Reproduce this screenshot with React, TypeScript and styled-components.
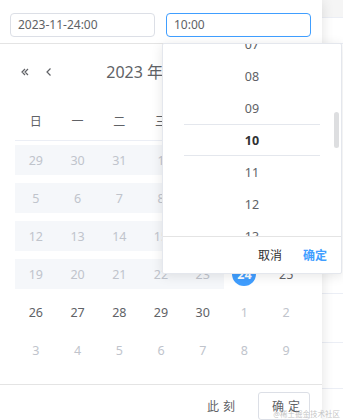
import React from 'react'
import styled, { createGlobalStyle, css } from 'styled-components'

const GlobalStyle = createGlobalStyle`
  html, body {
    margin: 0;
    padding: 0;
    background: #fff;
    overflow: hidden;
  }
  body {
    font-family: "Noto Sans", "Noto Sans CJK SC", sans-serif;
    color: #606266;
  }
`

const Page = styled.div`
  display: flex;
  width: 343px;
  height: 420px;
  overflow: hidden;
`

const Panel = styled.div`
  position: relative;
  width: 322px;
  flex-shrink: 0;
  background: #fff;
  box-shadow: 0 2px 12px 0 rgba(0, 0, 0, 0.12);
  z-index: 1;
`

const Backdrop = styled.div`
  flex: 1;
  display: flex;
  flex-direction: column;
`

const BackRow = styled.div<{ h: number; shade?: boolean }>`
  height: ${p => p.h}px;
  flex-shrink: 0;
  border-bottom: 1px solid #ebeef5;
  background: ${p => (p.shade ? '#f5f5f5' : '#fff')};
`

const TimeHeader = styled.div`
  display: flex;
  gap: 11px;
  padding: 13px 11px 6px 10px;
  border-bottom: 1px solid #e4e4e4;
`

const Input = styled.div<{ focused?: boolean }>`
  width: 145px;
  height: 24px;
  box-sizing: border-box;
  border: 1px solid ${p => (p.focused ? '#409eff' : '#dcdfe6')};
  border-radius: 4px;
  padding: 0 7px;
  font-size: 12px;
  line-height: 22px;
  color: #606266;
`

const CalHeader = styled.div`
  position: relative;
  height: 22px;
  padding: 17px 0 18px;
  display: flex;
  align-items: center;
  justify-content: center;
`

const NavGroup = styled.div`
  position: absolute;
  left: 19px;
  top: 17px;
  height: 22px;
  display: flex;
  align-items: center;
  gap: 12px;
`

const NavIcon = styled.svg`
  width: 12px;
  height: 12px;
  stroke: #606266;
  fill: none;
  stroke-width: 1.2;
`

const Label = styled.div`
  font-size: 16px;
  line-height: 22px;
  color: #606266;
  padding-right: 10px;
`

const Content = styled.div`
  margin: 0 15px;
`

const WeekRow = styled.div`
  display: grid;
  grid-template-columns: repeat(7, 1fr);
  height: 40px;
  box-sizing: border-box;
  border-bottom: 1px solid #ebeef5;
`

const WeekCell = styled.div`
  display: flex;
  align-items: center;
  justify-content: center;
  font-size: 12px;
  color: #606266;
`

const DateRow = styled.div`
  display: grid;
  grid-template-columns: repeat(7, 1fr);
  padding: 4px 0;
`

type Kind = 'disabled' | 'normal' | 'next' | 'current'

const DateCell = styled.div<{ kind: Kind }>`
  height: 30px;
  display: flex;
  align-items: center;
  justify-content: center;
  font-size: 12.5px;
  color: #606266;
  ${p =>
    p.kind === 'disabled' &&
    css`
      background: #f5f7fa;
      color: #c0c4cc;
    `}
  ${p =>
    p.kind === 'next' &&
    css`
      color: #c0c4cc;
    `}
`

const Circle = styled.span<{ active?: boolean }>`
  width: 24px;
  height: 24px;
  border-radius: 50%;
  display: flex;
  align-items: center;
  justify-content: center;
  ${p =>
    p.active &&
    css`
      background: #409eff;
      color: #fff;
      font-weight: 700;
    `}
`

const Footer = styled.div`
  margin-top: 15px;
  border-top: 1px solid #e4e4e4;
  padding: 7px 12px 8px;
  display: flex;
  justify-content: flex-end;
  align-items: center;
  gap: 19px;
`

const TextButton = styled.span`
  font-size: 12px;
  letter-spacing: 4px;
  color: #606266;
`

const PlainButton = styled.span`
  width: 52px;
  height: 28px;
  box-sizing: border-box;
  border: 1px solid #dcdfe6;
  border-radius: 3px;
  font-size: 12px;
  letter-spacing: 4px;
  padding-left: 8px;
  display: flex;
  align-items: center;
  justify-content: center;
  color: #606266;
`

const TimePopup = styled.div`
  position: absolute;
  left: 162px;
  top: 43px;
  width: 180px;
  box-sizing: border-box;
  background: #fff;
  border: 1px solid #e4e7ed;
  border-radius: 2px;
  box-shadow: 0 2px 12px 0 rgba(0, 0, 0, 0.1);
  z-index: 5;
`

const Spinner = styled.div`
  position: relative;
  height: 192px;
  overflow: hidden;
`

const SpinList = styled.div`
  margin-top: -15px;
  display: flex;
  flex-direction: column;
`

const SpinItem = styled.div<{ active?: boolean }>`
  height: 32px;
  line-height: 32px;
  text-align: center;
  font-size: 12.5px;
  color: ${p => (p.active ? '#303133' : '#606266')};
  font-weight: ${p => (p.active ? 700 : 400)};
`

const SelectBand = styled.div`
  position: absolute;
  left: 21px;
  right: 21px;
  top: 80px;
  height: 30px;
  border-top: 1px solid #e4e7ed;
  border-bottom: 1px solid #e4e7ed;
  pointer-events: none;
`

const Thumb = styled.div`
  position: absolute;
  right: 2px;
  top: 68px;
  width: 5px;
  height: 36px;
  border-radius: 3px;
  background: rgba(144, 147, 153, 0.3);
`

const PopFooter = styled.div`
  height: 36px;
  border-top: 1px solid #e4e4e4;
  display: flex;
  justify-content: flex-end;
  align-items: center;
  gap: 21px;
  padding-right: 14px;
`

const PopButton = styled.span<{ confirm?: boolean }>`
  font-size: 12px;
  color: ${p => (p.confirm ? '#409eff' : '#303133')};
  font-weight: ${p => (p.confirm ? 700 : 400)};
`

const Watermark = styled.div`
  position: absolute;
  right: 3px;
  bottom: 1px;
  font-size: 7.5px;
  color: rgba(170, 170, 170, 0.7);
  z-index: 6;
  white-space: nowrap;
`

const weeks = ['日', '一', '二', '三', '四', '五', '六']

const rows: { d: number; kind: Kind }[][] = [
  [29, 30, 31, 1, 2, 3, 4].map(d => ({ d, kind: 'disabled' as Kind })),
  [5, 6, 7, 8, 9, 10, 11].map(d => ({ d, kind: 'disabled' as Kind })),
  [12, 13, 14, 15, 16, 17, 18].map(d => ({ d, kind: 'disabled' as Kind })),
  [19, 20, 21, 22, 23, 24, 25].map(d => ({
    d,
    kind: (d < 24 ? 'disabled' : d === 24 ? 'current' : 'normal') as Kind,
  })),
  [26, 27, 28, 29, 30, 1, 2].map((d, i) => ({ d, kind: (i < 5 ? 'normal' : 'next') as Kind })),
  [3, 4, 5, 6, 7, 8, 9].map(d => ({ d, kind: 'next' as Kind })),
]

const hours = ['07', '08', '09', '10', '11', '12', '13']

export default function App() {
  return (
    <Page>
      <GlobalStyle />
      <Panel>
        <TimeHeader>
          <Input>2023-11-24:00</Input>
          <Input focused>10:00</Input>
        </TimeHeader>

        <CalHeader>
          <NavGroup>
            <NavIcon viewBox="0 0 12 12">
              <path d="M6 3 L3 6 L6 9 M9 3 L6 6 L9 9" />
            </NavIcon>
            <NavIcon viewBox="0 0 12 12">
              <path d="M7.5 2.5 L4 6 L7.5 9.5" />
            </NavIcon>
          </NavGroup>
          <Label>2023 年 11 月</Label>
        </CalHeader>

        <Content>
          <WeekRow>
            {weeks.map(w => (
              <WeekCell key={w}>{w}</WeekCell>
            ))}
          </WeekRow>
          {rows.map((r, i) => (
            <DateRow key={i}>
              {r.map((c, j) => (
                <DateCell key={j} kind={c.kind}>
                  <Circle active={c.kind === 'current'}>{c.d}</Circle>
                </DateCell>
              ))}
            </DateRow>
          ))}
        </Content>

        <Footer>
          <TextButton>此刻</TextButton>
          <PlainButton>确定</PlainButton>
        </Footer>

        <TimePopup>
          <Spinner>
            <SpinList>
              {hours.map(h => (
                <SpinItem key={h} active={h === '10'}>
                  {h}
                </SpinItem>
              ))}
            </SpinList>
            <SelectBand />
            <Thumb />
          </Spinner>
          <PopFooter>
            <PopButton>取消</PopButton>
            <PopButton confirm>确定</PopButton>
          </PopFooter>
        </TimePopup>
      </Panel>
      <Backdrop>
        <BackRow h={17} shade />
        <BackRow h={25} />
        <BackRow h={249} />
        <BackRow h={48} />
        <BackRow h={45} />
      </Backdrop>
      <Watermark>@稀土掘金技术社区</Watermark>
    </Page>
  )
}
